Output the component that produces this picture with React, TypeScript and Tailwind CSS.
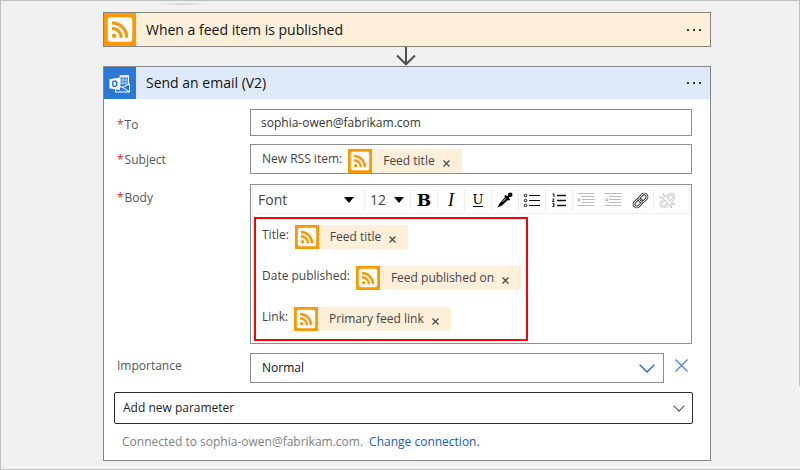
import type { ReactNode } from "react";

function RssTile({ className }: { className: string }) {
  return (
    <svg viewBox="0 0 24 24" className={`shrink-0 bg-[#fb9a00] ${className}`} aria-hidden="true">
      <rect x="2.800" y="2.800" width="18.400" height="18.400" rx="2" fill="#fff" />
      <circle cx="7.600" cy="16.700" r="1.700" fill="#fb9a00" />
      <path d="M5.900 11.200a7 7 0 0 1 7 7M5.900 7a11.200 11.200 0 0 1 11.200 11.200" fill="none" stroke="#fb9a00" strokeWidth="2.400" />
    </svg>
  );
}

function OutlookTile() {
  return (
    <svg viewBox="0 0 32 32" className="size-8 shrink-0 bg-[#2b78d6]" aria-hidden="true">
      <path d="M16 8.5h8.5v12H16z" fill="#2b78d6" stroke="#fff" strokeWidth="1" />
      <path d="M16 8h9v2.500h-9z" fill="#dce9f8" />
      <path d="M16 13h9M16 16h9M19 9v9M22 9v9" stroke="#cfe0f5" strokeWidth=".8" />
      <path d="M12 17.500l6 3 7.500-3.500v8H11.500z" fill="#2b78d6" stroke="#fff" strokeWidth="1" />
      <path d="M18 20l7.500 5" stroke="#fff" strokeWidth="1" />
      <path d="M5.500 12.200L16 10.500v12.500L5.500 21.300z" fill="#fff" />
      <ellipse cx="10.700" cy="16.700" rx="2.200" ry="2.700" fill="none" stroke="#2b78d6" strokeWidth="1.500" />
    </svg>
  );
}

function Token({ label }: { label: string }) {
  return (
    <span className="inline-flex h-6 items-center bg-[#feefdb] pr-3 text-[#444]">
      <RssTile className="size-6" />
      <span className="ml-[11px]">{label}</span>
      <button type="button" aria-label={`Remove ${label}`} className="ml-2 pt-1">
        <svg viewBox="0 0 7 7" className="size-[7px]" stroke="#444" strokeWidth="1.2">
          <path d="M.5.5l6 6M6.500.5l-6 6" />
        </svg>
      </button>
    </span>
  );
}

function Header({ icon, title, tone }: { icon: ReactNode; title: string; tone: string }) {
  return (
    <div className={`flex items-center pr-2 ${tone}`}>
      {icon}
      <h2 className="ml-2.5 flex-1 text-sm text-[#111]">{title}</h2>
      <button type="button" aria-label={`${title} menu`} className="flex gap-1 p-px">
        <span className="size-0.5 bg-[#333]" />
        <span className="size-0.5 bg-[#333]" />
        <span className="size-0.5 bg-[#333]" />
      </button>
    </div>
  );
}

function Label({ children, id, target }: { children: string; id: string; target?: string }) {
  return (
    <label id={id} htmlFor={target} className="text-[#555]">
      <span className="mr-px text-[#d22]">*</span>
      {children}
    </label>
  );
}

function Tool({ name, children, faint }: { name: string; children: ReactNode; faint?: boolean }) {
  return (
    <button
      type="button"
      aria-label={name}
      disabled={faint}
      className={`flex h-[22px] w-[27px] items-center justify-center border-r text-black ${faint ? "border-transparent" : "border-[#eee]"}`}
    >
      {children}
    </button>
  );
}

function Triangle() {
  return (
    <svg viewBox="0 0 10 6" className="pointer-events-none h-1.5 w-2.5" aria-hidden="true">
      <path d="M0 0h10L5 6z" />
    </svg>
  );
}

function Chain({ color }: { color: string }) {
  return (
    <g transform="rotate(-45 9 9)" fill="none">
      <rect x="0.500" y="6" width="9.500" height="6" rx="3" stroke={color} strokeWidth="2.800" />
      <rect x="0.500" y="6" width="9.500" height="6" rx="3" stroke="#fff" strokeWidth="1" />
      <rect x="8" y="6" width="9.500" height="6" rx="3" stroke={color} strokeWidth="2.800" />
      <rect x="8" y="6" width="9.500" height="6" rx="3" stroke="#fff" strokeWidth="1" />
    </g>
  );
}

function Toolbar() {
  return (
    <div role="toolbar" aria-label="Formatting" className="m-px flex h-7 items-center border border-[#eee] text-sm text-[#444]">
      <div className="flex h-[22px] flex-1 items-center border-r border-[#eee] pr-2.5 pl-[5px]">
        <select aria-label="Font" className="min-w-0 flex-1 appearance-none">
          <option>Font</option>
        </select>
        <Triangle />
      </div>
      <div className="flex h-[22px] w-[46px] items-center border-r border-[#eee] pr-1.5 pl-[5px]">
        <select aria-label="Font size" className="min-w-0 flex-1 appearance-none">
          <option>12</option>
        </select>
        <Triangle />
      </div>
      <Tool name="Bold"><b className="font-['DejaVu_Serif',serif] text-[17px] leading-none">B</b></Tool>
      <Tool name="Italic"><i className="font-['Liberation_Serif',serif] text-lg leading-none">I</i></Tool>
      <Tool name="Underline"><span className="border-b border-black font-['DejaVu_Serif',serif] text-[13px] leading-3">U</span></Tool>
      <Tool name="Color">
        <svg viewBox="0 0 16 16" className="size-4">
          <path d="M9 4l3 3-7 6.500-4.500 2 2-4z" />
          <path d="M8 3.500l4.500 4.500M10.500 5.500L13.500 2.500" stroke="#000" strokeWidth="2" />
          <circle cx="13.300" cy="2.700" r="2.200" />
          <path d="M9 6L5.500 10" stroke="#fff" strokeWidth=".7" />
        </svg>
      </Tool>
      <Tool name="Bulleted list">
        <svg viewBox="0 0 18 14" className="h-3.5 w-[18px]" fill="none" stroke="#111">
          <path d="M6 2.500h11M6 7.500h11M6 12.500h11" />
          <circle cx="2.500" cy="2.500" r="1.300" />
          <circle cx="2.500" cy="7.500" r="1.300" />
          <circle cx="2.500" cy="12.500" r="1.300" />
        </svg>
      </Tool>
      <Tool name="Numbered list">
        <svg viewBox="0 0 14 14" className="size-3.5" fill="none" stroke="#111">
          <path d="M5 2.500h9M5 7.500h9M5 12.500h9" strokeWidth="1.400" />
          <path d="M.5 1h1.500v3M.5 6h1.500L.5 8.500h2M.5 10.500h1.500v3H.5M1 12h1" />
        </svg>
      </Tool>
      <Tool name="Indent" faint>
        <svg viewBox="0 0 18 14" className="h-3.5 w-[18px]" fill="none" stroke="#bbb">
          <path d="M.5.5h17M5 3.500h12.500M5 6.500h12.500M5 9.500h12.500M.5 12.500h17" />
          <path d="M1 5l2.500 2L1 9z" fill="#aaa" stroke="none" />
        </svg>
      </Tool>
      <Tool name="Outdent" faint>
        <svg viewBox="0 0 18 14" className="h-3.5 w-[18px]" fill="none" stroke="#bbb">
          <path d="M.5.5h17M5 3.500h12.500M5 6.500h12.500M5 9.500h12.500M.5 12.500h17" />
          <path d="M3.500 5L1 7l2.500 2z" fill="#aaa" stroke="none" />
        </svg>
      </Tool>
      <Tool name="Insert link">
        <svg viewBox="0 0 18 18" className="size-[17px]"><Chain color="#111" /></svg>
      </Tool>
      <Tool name="Remove link" faint>
        <svg viewBox="0 0 18 18" className="size-[17px]">
          <Chain color="#bbb" />
          <path d="M5 5l8 8" stroke="#fff" strokeWidth="2.500" />
          <path d="M1 5.500l4 1M4.500 1.500l1.500 4M17 13l-4-1M13.500 17L12 13" stroke="#aaa" />
        </svg>
      </Tool>
      <div className="w-2" />
    </div>
  );
}

function Chevron({ className, color, width }: { className: string; color: string; width: number }) {
  return (
    <svg viewBox="0 0 16 9" className={`pointer-events-none ${className}`} fill="none" stroke={color} strokeWidth={width} aria-hidden="true">
      <path d="M.7.7L8 8 15.300.7" />
    </svg>
  );
}

export default function App() {
  return (
    <div className="relative min-h-screen border border-r-0 border-[#c0c0c0] bg-[#f1f1f1] pr-[89px] pb-2 pl-[102px] font-['Open_Sans','Noto_Sans',sans-serif] text-xs">
      <div className="absolute top-0 right-0 h-[385px] w-px bg-[#c0c0c0]" />
      <div className="ml-14 h-[11px] w-[46px] pt-0.5">
        <div className="h-0.5 bg-linear-to-r from-transparent via-[#d5d5d5] to-transparent" />
      </div>

      <section className="border border-[#858585]">
        <Header
          icon={<RssTile className="h-[33px] w-8" />}
          title="When a feed item is published"
          tone="bg-[#feefdb]"
        />
      </section>

      <div className="flex justify-center pr-0.5">
        <svg viewBox="0 0 20 19" className="h-[19px] w-5" fill="none" stroke="#505050" strokeWidth="2" aria-hidden="true">
          <path d="M10 0v17M1 8.500l9 8.800 9-8.800" />
        </svg>
      </div>

      <section className="border border-[#858585] bg-white">
        <Header icon={<OutlookTile />} title="Send an email (V2)" tone="bg-[#deeaf8]" />

        <div className="grid grid-cols-[133px_1fr] pt-2.5 pr-[18px] pl-[13px]">
          <div className="pt-2"><Label id="to-label" target="to">To</Label></div>
          <input
            id="to"
            type="email"
            defaultValue="sophia-owen@fabrikam.com"
            className="h-[27px] w-full border border-[#8d8d8d] px-2.5 text-[#333]"
          />

          <div className="pt-4"><Label id="subject-label">Subject</Label></div>
          <div
            role="textbox"
            aria-labelledby="subject-label"
            className="mt-2 flex h-[30px] items-start gap-1.5 border border-[#8d8d8d] pt-1 pl-[11px] text-[#444]"
          >
            <span className="leading-5">New RSS item:</span>
            <Token label="Feed title" />
          </div>

          <div className="pt-4"><Label id="body-label">Body</Label></div>
          <div className="mt-2.5 border border-[#8d8d8d] pb-0.5">
            <Toolbar />
            <div
              role="textbox"
              aria-multiline="true"
              aria-labelledby="body-label"
              className="mt-[3px] ml-[3px] flex h-[124px] w-[274px] max-w-full flex-col gap-[17px] border-2 border-[#fe0000] pt-1.5 pl-1.5 text-[#444]"
            >
              <p className="flex items-start gap-1.5">
                <span className="leading-5">Title:</span>
                <Token label="Feed title" />
              </p>
              <p className="flex items-start gap-1.5">
                <span className="leading-5">Date published:</span>
                <Token label="Feed published on" />
              </p>
              <p className="flex items-start gap-1.5">
                <span className="leading-5">Link:</span>
                <Token label="Primary feed link" />
              </p>
            </div>
          </div>

          <label htmlFor="importance" className="pt-3.5 text-[#555]">Importance</label>
          <div className="mt-[9px] flex items-start">
            <div className="flex flex-1 items-center border border-[#8d8d8d] pr-2">
              <select id="importance" className="h-7 min-w-0 flex-1 appearance-none pl-[11px] text-[#111]">
                <option>Normal</option>
              </select>
              <Chevron className="h-[9px] w-4" color="#3a73d0" width={1.6} />
            </div>
            <button type="button" aria-label="Clear importance" className="mt-1.5 ml-[11px] mr-1">
              <svg viewBox="0 0 13 13" className="size-[13px]" stroke="#4a80d5" strokeWidth="1.2">
                <path d="M.5.5l12 12M12.500.5l-12 12" />
              </svg>
            </button>
          </div>
        </div>

        <div className="mt-[9px] mr-[17px] ml-2.5 flex items-center rounded-xs border border-[#2b2b2b] pr-[7px]">
          <select aria-label="Add new parameter" className="h-[30px] min-w-0 flex-1 appearance-none pl-2 text-[#222]">
            <option>Add new parameter</option>
          </select>
          <Chevron className="h-[7px] w-3" color="#555" width={1.5} />
        </div>

        <p className="mt-[9px] mb-[9px] ml-[18px] leading-[18px] text-[#808080]">
          Connected to sophia-owen@fabrikam.com.
          <a href="#connection" className="ml-1.5 text-[#1e5cb3]">Change connection.</a>
        </p>
      </section>
    </div>
  );
}
